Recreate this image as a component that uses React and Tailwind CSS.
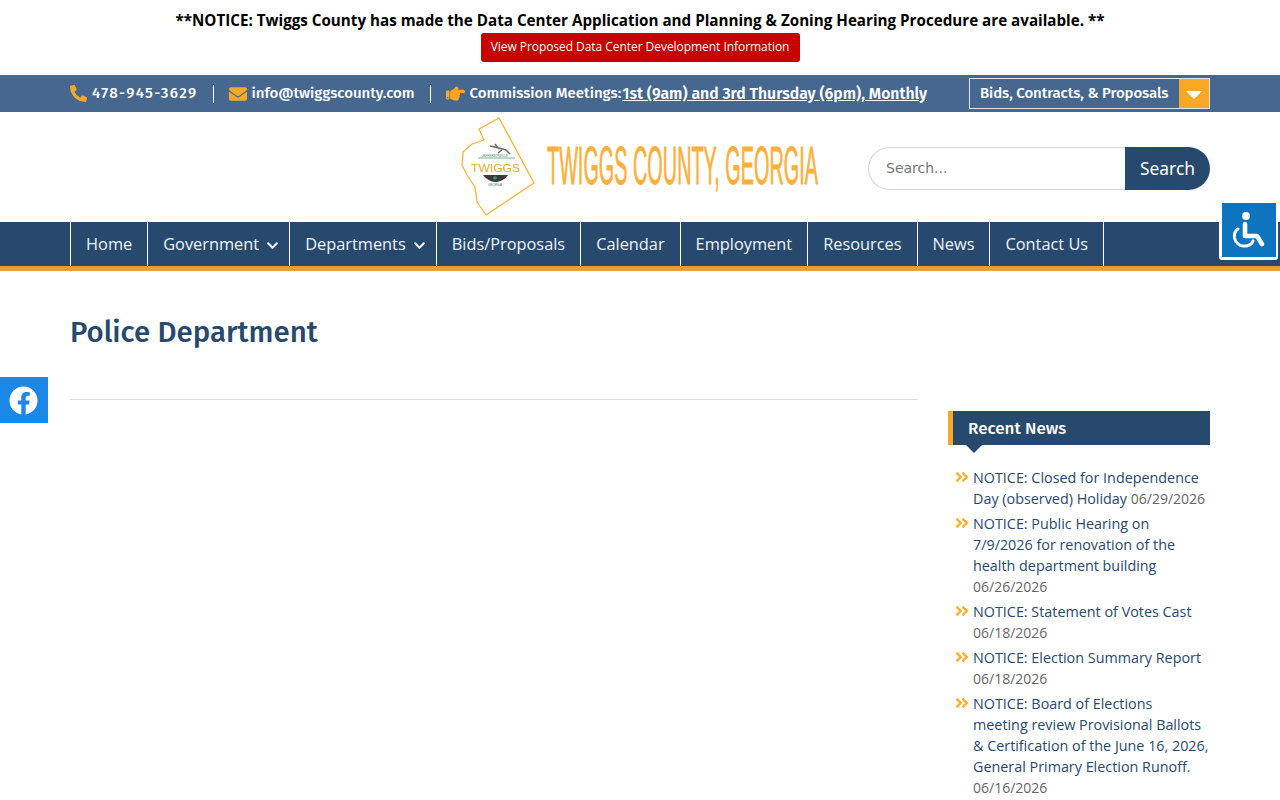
import React from "react";
import { FaPhoneAlt, FaEnvelope, FaFacebook, FaAngleDoubleRight, FaChevronDown, FaHandPointRight } from "react-icons/fa";

const heading = { fontFamily: '"Fira Sans","Open Sans","Noto Sans",sans-serif' };

const navItems = [
  ["Home", false], ["Government", true], ["Departments", true], ["Bids/Proposals", false],
  ["Calendar", false], ["Employment", false], ["Resources", false], ["News", false], ["Contact Us", false],
];

const news = [
  ["NOTICE: Closed for Independence Day (observed) Holiday", "06/29/2026"],
  ["NOTICE: Public Hearing on 7/9/2026 for renovation of the health department building", "06/26/2026"],
  ["NOTICE: Statement of Votes Cast", "06/18/2026"],
  ["NOTICE: Election Summary Report", "06/18/2026"],
  ["NOTICE: Board of Elections meeting review Provisional Ballots & Certification of the June 16, 2026, General Primary Election Runoff.", "06/16/2026"],
];

function Logo() {
  return (
    <svg width="360" height="102" viewBox="0 0 360 102" className="block">
      <path d="M39 2 L19 13 L24 24 L12 28 L3 36 L2 49 L7 59 L15 71 L17 86 L26 99 L74 67 Z" fill="white" stroke="#f9b233" strokeWidth="1.3" strokeLinejoin="round" />
      <path d="M30 30 C36 31 41 33 46 34 L50 38 M35 28 L39 33 M38 37 L42 34" stroke="#66705a" strokeWidth="1.5" fill="none" />
      <path d="M18 42 H55" stroke="#7fae8f" strokeWidth="1" />
      <path d="M23 59 H48 C44 65 38 66 35 66 C31 66 26 63 23 59 Z" fill="#3d3a34" />
      <circle cx="35" cy="62" r="1.8" fill="#2f8fa8" />
      <text x="11" y="56" fontSize="11" fill="#e3a832" fontFamily="Liberation Sans, sans-serif" textLength="49" lengthAdjust="spacingAndGlyphs">TWIGGS</text>
      <text x="35" y="41" textAnchor="middle" fontSize="3" fill="#4b7d5c" fontFamily="Liberation Sans, sans-serif">JEFFERSONVILLE</text>
      <text x="35" y="69.5" textAnchor="middle" fontSize="3" fill="#4b7d5c" fontFamily="Liberation Sans, sans-serif">GEORGIA</text>
      <text x="87" y="68" fontSize="54" fill="#fbb03b" stroke="#fbb03b" strokeWidth="0.9" fontFamily="Liberation Sans, sans-serif" textLength="271" lengthAdjust="spacingAndGlyphs">TWIGGS COUNTY, GEORGIA</text>
    </svg>
  );
}

function Wheelchair() {
  return (
    <svg width="34" height="38" viewBox="0 0 34 38" fill="none" className="block">
      <circle cx="14" cy="5" r="4" fill="white" />
      <path d="M13 13 V25 H25 L30 33" stroke="white" strokeWidth="4.6" strokeLinecap="round" strokeLinejoin="round" />
      <path d="M6 18 C3 20 2 24 2.5 27 C3.5 32 8 35.5 12.5 35 C16.5 35 20 33 21 30" stroke="white" strokeWidth="3" strokeLinecap="round" />
    </svg>
  );
}

export default function App() {
  return (
    <div className="relative h-[800px] overflow-hidden bg-white text-[15px] text-[#333]" style={{ fontFamily: '"Open Sans","Noto Sans",sans-serif' }}>
      <div className="h-[75px] pt-[9px] flex flex-col items-center">
        <p className="text-[15.2px] leading-[22px] font-bold text-black">**NOTICE: Twiggs County has made the Data Center Application and Planning &amp; Zoning Hearing Procedure are available. **</p>
        <a className="mt-[2px] h-[29px] w-[319px] pb-[1px] flex items-center justify-center bg-[#c80000] rounded-[3px] text-white text-[12px] tracking-[-0.05px]">View Proposed Data Center Development Information</a>
      </div>

      <div className="h-[37px] bg-[#46678f]">
        <div className="w-[1140px] h-full mx-auto flex items-center text-white text-[15px] font-medium" style={heading}>
          <span className="flex items-center pr-[16px] border-r border-white h-[18px] tracking-[1.35px]">
            <FaPhoneAlt className="text-[#f9a826] text-[17px] mr-[5px]" />478-945-3629
          </span>
          <span className="flex items-center px-[15px] border-r border-white h-[18px] tracking-[-0.02px]">
            <FaEnvelope className="text-[#f9a826] text-[18px] mr-[4px]" />info@twiggscounty.com
          </span>
          <span className="flex items-center pl-[15px] h-[18px]">
            <FaHandPointRight className="text-[#f9a826] text-[19px] mr-[5px]" />Commission Meetings:<span className="underline font-semibold text-[15.75px] ml-[1px]">1st (9am) and 3rd Thursday (6pm), Monthly</span>
          </span>
          <div className="ml-auto w-[241px] h-[31px] border border-[#dfe6ee] flex items-center justify-between">
            <span className="pl-[10px] tracking-[-0.1px]">Bids, Contracts, &amp; Proposals</span>
            <span className="w-[30px] h-full bg-[#f9a826] flex items-center justify-center">
              <span className="mt-[3px] border-x-[8px] border-x-transparent border-t-[8px] border-t-white" />
            </span>
          </div>
        </div>
      </div>

      <div className="h-[110px]">
        <div className="w-[1140px] h-full mx-auto flex items-center">
          <div className="ml-[390px] -mt-[1px]"><Logo /></div>
          <div className="ml-auto flex h-[43px] w-[342px] mt-[2px]">
            <div className="flex-1 border border-[#d4d4d4] border-r-0 rounded-l-[22px] flex items-center pl-[17px] text-[14px] text-[#757575]" style={{ fontFamily: '"DejaVu Sans",sans-serif' }}>Search...</div>
            <div className="w-[85px] bg-[#27496d] rounded-r-[22px] flex items-center justify-center text-white text-[17.4px]" style={{ fontFamily: '"Noto Sans",sans-serif' }}>Search</div>
          </div>
        </div>
      </div>

      <div className="h-[49px] bg-[#27496d] border-b-[5px] border-b-[#e8a02f]">
        <ul className="w-[1140px] h-full mx-auto flex border-l border-white">
          {navItems.map(([label, caret]) => (
            <li key={label} className="h-full flex items-center border-r border-white px-[15px] text-[#eef3f8] text-[16.35px]">
              {label}
              {caret && <FaChevronDown className="text-[13px] ml-[7px] -mr-[5px] mt-[3px]" />}
            </li>
          ))}
        </ul>
      </div>

      <div className="w-[1140px] mx-auto">
        <h1 className="mt-[42px] text-[29.4px] leading-[40px] font-medium text-[#27496d]" style={heading}>Police Department</h1>
        <div className="flex gap-[30px] mt-[46px]">
          <div className="w-[848px] border-t border-[#dddddd] h-0" />
          <aside className="w-[262px] mt-[12px]">
            <div className="relative h-[34px] bg-[#27496d] border-l-[5px] border-l-[#f9a826] pl-[15px] pt-[1px] flex items-center text-white text-[17px] font-medium" style={heading}>
              Recent News
              <span className="absolute left-[13px] top-[34px] border-x-[8px] border-x-transparent border-t-[8px] border-t-[#27496d]" />
            </div>
            <ul className="mt-[22px] flex flex-col gap-[4px]">
              {news.map(([t, d]) => (
                <li key={t} className="flex text-[14.35px] leading-[21px]">
                  <FaAngleDoubleRight className="w-[14px] ml-[7px] mr-[4px] shrink-0 text-[#f9b233] text-[16px] mt-[2px]" />
                  <div className="text-[#27496d] w-[236px]">{t} <span className="text-[#666] text-[14px]">{d}</span></div>
                </li>
              ))}
            </ul>
          </aside>
        </div>
      </div>

      <div className="absolute left-0 top-[377px] w-[48px] h-[46px] bg-[#1b87e6] flex items-center justify-center pr-[2px] text-white">
        <FaFacebook className="text-[29px]" />
      </div>
      <div className="absolute left-[1219px] top-[200px] w-[59px] h-[60px] bg-white rounded-[3px] pt-[3px] pl-[3px]">
        <div className="w-[54px] h-[54px] bg-[#0e74bf] flex items-center justify-center">
          <Wheelchair />
        </div>
      </div>
    </div>
  );
}
